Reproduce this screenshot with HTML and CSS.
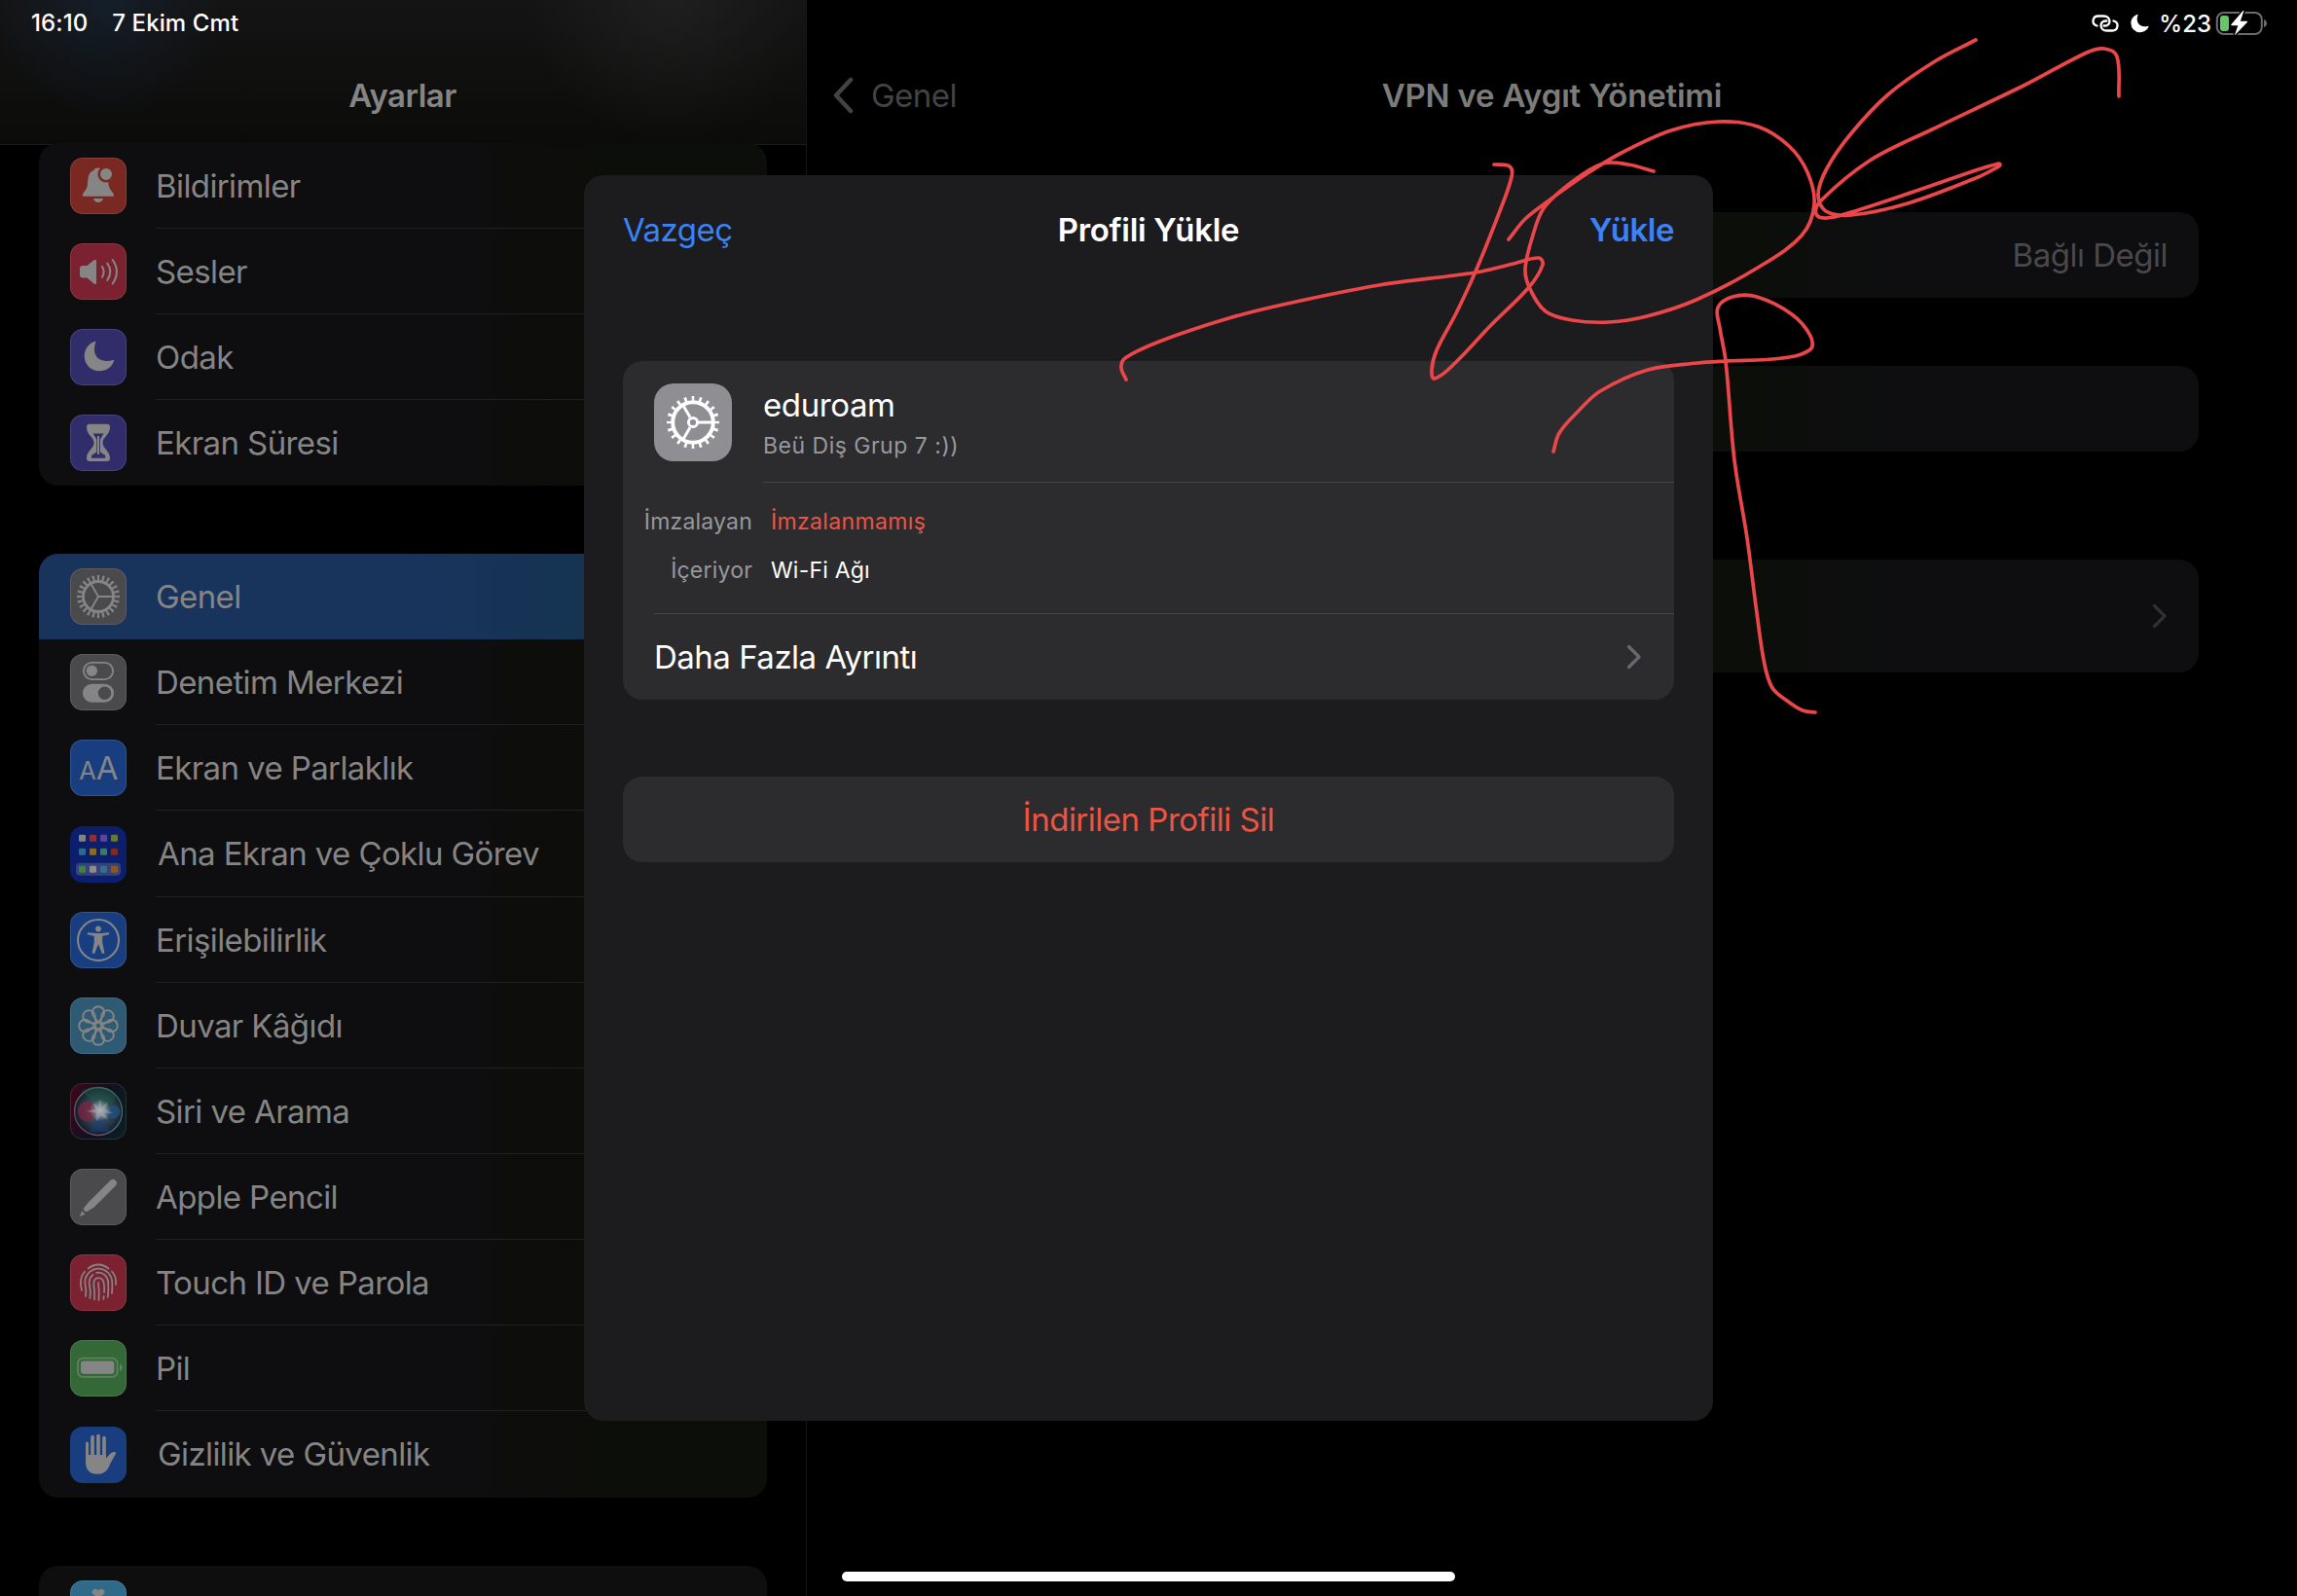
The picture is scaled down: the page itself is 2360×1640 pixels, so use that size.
FILE: index.html
```html
<!DOCTYPE html>
<html lang="tr">
<head>
<meta charset="utf-8">
<title>Ayarlar</title>
<link rel="stylesheet" href="styles.css">
</head>
<body>
<svg class="defs" width="0" height="0" aria-hidden="true">
  <defs>
    <radialGradient id="siri-orb" cx=".52" cy=".48" r=".52">
      <stop offset="0" stop-color="#b4b8bd"/><stop offset=".16" stop-color="#828b93"/><stop offset=".42" stop-color="#354f5c"/><stop offset="1" stop-color="#101c28"/>
    </radialGradient>
    <radialGradient id="siri-glow">
      <stop offset="0" stop-color="#b4b8bd"/><stop offset=".35" stop-color="#8f979e" stop-opacity=".8"/><stop offset="1" stop-color="#8f979e" stop-opacity="0"/>
    </radialGradient>
    <linearGradient id="siri-bg" x1="0" y1=".2" x2="1" y2=".6">
      <stop offset="0" stop-color="#3b0718"/><stop offset=".5" stop-color="#12101f"/><stop offset="1" stop-color="#0a1d22"/>
    </linearGradient>
    <linearGradient id="siri-rim" x1="0" y1="1" x2="1" y2="0">
      <stop offset="0" stop-color="#7a3454"/><stop offset=".5" stop-color="#5a6a72"/><stop offset="1" stop-color="#2f6b55"/>
    </linearGradient>
    <path id="petal" d="M29 25.500L23.600 18.500A6.200 6.200 0 1 1 34.400 18.500Z"/>
  </defs>
</svg>

<div class="screen">
  <aside class="sidebar">
    <header class="bar sidebar-bar"><h1 class="bar-title">Ayarlar</h1></header>
    <nav class="lists">
      <ul class="group group-first">
        <li class="row"><svg class="icon" viewBox="0 0 58 58" style="background:#7a2822"><path class="g" d="M12.800 38.500C13.400 35 17.600 33.500 18 27C18.300 18 20 14.500 24.500 13C26 9.800 31.500 9.800 33 13C37.500 14.500 39 18 39.500 27C40 33.500 44.500 35 45 38.500Q45 39.800 43.500 39.800H14.300Q12.800 39.800 12.800 38.500Z"/><path class="g" d="M23.800 42h10.200q-1.500 4-5.100 4t-5.100-4z"/><circle cx="37" cy="17" r="7.300" class="g" stroke="#7a2822" stroke-width="2.600"/></svg><span class="label">Bildirimler</span></li>
        <li class="row"><svg class="icon" viewBox="0 0 58 58" style="background:#7b2130"><path class="g" d="M13 23h4.500L24.500 17.300Q27 15.800 27 18.500V40.500Q27 43 24.500 41.500L17.500 35.500H13Q10 35.500 10 32.500V26Q10 23 13 23Z"/><g class="l" stroke-width="2.100"><path d="M33 24q3.200 5.300 0 10.600"/><path d="M38.300 20.500q6 8.700 0 17.400"/><path d="M43.700 17q8.500 12.200 0 24.400"/></g></svg><span class="label">Sesler</span></li>
        <li class="row"><svg class="icon" viewBox="0 0 58 58" style="background:#312d6b"><path class="g" d="M25.500 12.800C19 15 14.700 21 14.700 28c0 8.500 6.800 15.300 15.300 15.300 7 0 13-4 15.100-10.500q.2-1-.8-.8C38 34 31.500 33 28 29.500 24.500 25.500 24.300 19.500 26.300 13.600q.2-1-.8-.8z"/></svg><span class="label">Odak</span></li>
        <li class="row"><svg class="icon" viewBox="0 0 58 58" style="background:#312d6b"><path class="g" d="M20 9.800h18a3 3 0 0 1 3 3c0 8.500-7.500 10.200-7.500 16.200s7.500 8 7.500 16a3 3 0 0 1-3 3H20a3 3 0 0 1-3-3c0-8 7.500-10 7.500-16S17 21.300 17 12.800a3 3 0 0 1 3-3z"/><path fill="#312d6b" d="M23.700 19.500h10.800L30.900 25.500V38.500l5.300 3.600v2.700H22v-2.700l5.300-3.600V25.500z"/><path class="l flat" stroke-width="2" d="M29 22v19"/></svg><span class="label">Ekran Süresi</span></li>
      </ul>
      <ul class="group">
        <li class="row selected"><svg class="icon" viewBox="0 0 58 58" style="background:#4a4a4c"><g class="l flat"><circle cx="29" cy="29" r="15.500" stroke-width="2.800"/><circle cx="29" cy="29" r="19" stroke-width="6" pathLength="240" stroke-dasharray="4.400 5.600" stroke-dashoffset="2.200"/><path stroke-width="1.900" d="M29 29H44.500M29 29L21.200 15.600M29 29L21.200 42.400"/></g></svg><span class="label">Genel</span></li>
        <li class="row"><svg class="icon" viewBox="0 0 58 58" style="background:#4a4a4c"><rect class="l" x="13.900" y="8.900" width="30.200" height="17.200" rx="8.600" stroke-width="1.900"/><circle class="g" cx="22.300" cy="17.300" r="5.700"/><rect class="g" x="13" y="30.700" width="32" height="19" rx="9.500"/><circle fill="#4a4a4c" cx="35.500" cy="40.200" r="6.700"/></svg><span class="label">Denetim Merkezi</span></li>
        <li class="row"><svg class="icon" viewBox="0 0 58 58" style="background:#193e80"><text class="glyph" x="9.300" y="41" font-size="25.500">A</text><text class="glyph" x="26.800" y="41" font-size="33">A</text></svg><span class="label">Ekran ve Parlaklık</span></li>
        <li class="row row-tall"><svg class="icon plain" viewBox="0 0 58 58" style="background:#0b1f6d"><rect x="6" y="37.700" width="46" height="13" rx="4" fill="#37427a"/><g><rect x="9" y="8.700" width="7" height="7" rx="1.300" fill="#85837e"/><rect x="20" y="8.700" width="7" height="7" rx="1.300" fill="#8a3038"/><rect x="31" y="8.700" width="7" height="7" rx="1.300" fill="#65429a"/><rect x="42" y="8.700" width="7" height="7" rx="1.300" fill="#687a30"/><rect x="9" y="22.700" width="7" height="7" rx="1.300" fill="#2e6a8c"/><rect x="20" y="22.700" width="7" height="7" rx="1.300" fill="#8b6b20"/><rect x="31" y="22.700" width="7" height="7" rx="1.300" fill="#3a7b62"/><rect x="42" y="22.700" width="7" height="7" rx="1.300" fill="#812a22"/><rect x="9" y="40.700" width="7" height="7" rx="1.300" fill="#3c8244"/><rect x="20" y="40.700" width="7" height="7" rx="1.300" fill="#8c8c90"/><rect x="31" y="40.700" width="7" height="7" rx="1.300" fill="#2f7188"/><rect x="42" y="40.700" width="7" height="7" rx="1.300" fill="#8a5726"/></g></svg><span class="label">Ana Ekran ve Çoklu Görev</span></li>
        <li class="row"><svg class="icon" viewBox="0 0 58 58" style="background:#193e80"><circle class="l" cx="29" cy="29" r="21" stroke-width="2.100"/><circle class="g" cx="29" cy="17.500" r="2.900"/><path class="g" stroke="#858585" stroke-width="1.200" stroke-linejoin="round" d="M18.500 21.800L26 22.700H32L39.500 21.800 39.600 22.700 32.600 24.500V31L34.800 42 33.300 42.400 29.600 33H28.400L24.700 42.400 23.200 42 25.400 31V24.500L18.400 22.700Z"/></svg><span class="label">Erişilebilirlik</span></li>
        <li class="row"><svg class="icon" viewBox="0 0 58 58" style="background:#2f5a73"><g class="l" stroke-width="1.800"><use href="#petal"/><use href="#petal" transform="rotate(45 29 29)"/><use href="#petal" transform="rotate(90 29 29)"/><use href="#petal" transform="rotate(135 29 29)"/><use href="#petal" transform="rotate(180 29 29)"/><use href="#petal" transform="rotate(225 29 29)"/><use href="#petal" transform="rotate(270 29 29)"/><use href="#petal" transform="rotate(315 29 29)"/><circle cx="29" cy="29" r="3.300"/></g></svg><span class="label">Duvar Kâğıdı</span></li>
        <li class="row"><svg class="icon" viewBox="0 0 58 58"><rect width="58" height="58" rx="13" fill="url(#siri-bg)"/><rect x=".5" y=".5" width="57" height="57" rx="12.500" fill="none" stroke="#fff" opacity=".11"/><circle cx="29" cy="29" r="24.500" fill="url(#siri-orb)" stroke="url(#siri-rim)" stroke-width="1.300"/><ellipse cx="17.500" cy="29" rx="9.500" ry="10.500" fill="#7c2444" opacity=".75"/><ellipse cx="44.500" cy="29.500" rx="7" ry="7" fill="#245080" opacity=".75"/><path d="M12 8Q29-1 46 12Q50 22 31 27Z" fill="#1f5440" opacity=".45"/><path d="M20 50L30 30 42 50Z" fill="#1d3c7a" opacity=".5"/><circle cx="31" cy="28" r="11" fill="url(#siri-glow)"/><path d="M31 16l1.300 8.500 7-5-4 7 9 4.500-10-.5 5 7-7.500-4-5 6 .5-9-11-1.500 10.500-2.500-4-6 6 4z" fill="#a8adb2" opacity=".45"/></svg><span class="label">Siri ve Arama</span></li>
        <li class="row"><svg class="icon" viewBox="0 0 58 58" style="background:#4a4a4c"><path class="l" stroke-width="7.600" d="M44 14.700L22.500 36.200"/><path class="g" d="M19.800 33.500L25.200 38.900 18 43.800Q16 44.500 14.500 43T14.500 39.800Z"/><path class="g" d="M12.300 43.500L15.500 46.800 9.700 49Z"/></svg><span class="label">Apple Pencil</span></li>
        <li class="row"><svg class="icon" viewBox="0 0 58 58" style="background:#7b2130"><g class="l" stroke-width="1.750"><path d="M18.500 14.500Q29 6.500 39.500 14.500"/><path d="M12 37Q8.500 25 15 17.500"/><path d="M43 17.500Q48 23 47 31"/><path d="M16 43Q17 37 15.500 31C14 22 21 14.500 29 14.500C37 14.500 43 21 43.300 29Q43.500 36 43 40"/><path d="M20.500 45Q21.500 38 20 32Q18.500 25 23.500 21"/><path d="M27 18.800C34 17.500 39 23 39.200 29Q39.600 38 38.800 44"/><path d="M25 46.500Q25.500 38 24.300 31.500C23.800 27 26 24 29 24C32.500 24 34.500 26.500 34.800 30Q35.400 35 35 39"/><path d="M29.500 47Q30.200 38 29 29"/><path d="M34.700 43L34.400 46"/></g></svg><span class="label">Touch ID ve Parola</span></li>
        <li class="row"><svg class="icon" viewBox="0 0 58 58" style="background:#346937"><rect x="8" y="18.600" width="40.600" height="19.300" rx="5.500" fill="none" stroke="#5f8262" stroke-width="1.700"/><rect class="g" x="11" y="21.500" width="34.300" height="13.300" rx="3"/><path fill="#5f8262" d="M51 24.500Q53.700 25.500 53.700 28.200T51 32Z"/></svg><span class="label">Pil</span></li>
        <li class="row row-tall"><svg class="icon plain" viewBox="0 0 58 58" style="background:#193e80"><g class="l"><path stroke-width="3" d="M17.500 17V35"/><path stroke-width="3.700" d="M23 10.500V35M29 9.600V35M35 11.600V35"/></g><path class="g" d="M16 29H36.900V32.500L41 28Q43.500 25.300 46.800 26.300Q47.700 26.800 46.800 28L41.500 37.500C39 44 36 48.700 28.500 48.700C20 48.700 16 44.500 16 36Z"/></svg><span class="label">Gizlilik ve Güvenlik</span></li>
      </ul>
      <ul class="group group-last">
        <li class="row"><svg class="icon" viewBox="0 0 58 58" style="background:#2f6a88"><path class="g" d="M29 18L24 14.500A3.200 3.200 0 1 1 29 12.500A3.200 3.200 0 1 1 34 14.500Z"/></svg></li>
      </ul>
    </nav>
  </aside>

  <main class="detail">
    <header class="bar detail-bar">
      <div class="back"><svg width="22" height="38" viewBox="0 0 22 38"><path d="M19 3L4 19 19 35" fill="none" stroke="#434343" stroke-width="4.500" stroke-linecap="round" stroke-linejoin="round"/></svg><span>Genel</span></div>
      <h2 class="bar-title detail-title">VPN ve Aygıt Yönetimi</h2>
    </header>
    <section class="cards">
      <div class="card vpn"><span class="value">Bağlı Değil</span></div>
      <div class="card"></div>
      <div class="card profile"><svg width="16" height="26" viewBox="0 0 16 26"><path d="M2.500 2.500L13 13 2.500 23.500" fill="none" stroke="#303033" stroke-width="3.400" stroke-linecap="round" stroke-linejoin="round"/></svg></div>
    </section>
  </main>
</div>

<div class="status">
  <div class="status-left"><span class="clock">16:10</span><span class="date">7 Ekim Cmt</span></div>
  <div class="status-right">
    <svg width="28" height="18" viewBox="0 0 28 18"><g fill="none" stroke="#fff" stroke-width="2.300" stroke-linecap="round"><path d="M5.500 11.500C-.5 10 .5 1.500 7 1.500H12.500C20 1.500 20.500 11.500 13.500 11.500H12.500"/><path d="M22.500 6.500C28.500 8 27.500 16.500 21 16.500H15.500C8 16.500 7.500 6.500 14.500 6.500H15.500"/></g></svg>
    <svg class="moon" width="19" height="20" viewBox="0 0 19 20"><path fill="#fff" d="M7 .8C3 2.300 .4 5.800 .4 10A9.200 9.200 0 0 0 9.600 19.200C13.700 19.200 17.200 17 18.600 13.300Q18.700 12.500 18 12.700C14 14 10.500 13 8.500 10.800C6.500 8.500 6.200 5 7.500 1.500Q7.700.6 7 .8Z"/></svg>
    <span class="percent">%23</span>
    <svg class="battery" width="54" height="26" viewBox="0 0 54 26"><rect x="1.800" y="2" width="46" height="22" rx="7" fill="none" stroke="#6c6c6c" stroke-width="2"/><rect x="5" y="5" width="9" height="16" rx="3" fill="#67c768"/><path fill="#6c6c6c" d="M50 9Q53 10.200 53 13T50 17Z"/><path d="M28.500 0L16.300 14.300Q15.800 15.200 17 15.200H23.300L19.800 25.500 33 11.800Q33.500 10.800 32.300 10.800H25.800L29.500 0Z" fill="#fff" stroke="#000" stroke-width="3" paint-order="stroke"/></svg>
  </div>
</div>

<section class="modal">
  <header class="modal-bar"><span class="action">Vazgeç</span><h3 class="modal-title">Profili Yükle</h3><span class="action install">Yükle</span></header>
  <div class="panel">
    <div class="summary">
      <svg class="profile-icon" width="80" height="80" viewBox="0 0 80 80"><g fill="none" stroke="#fff"><circle cx="40" cy="40" r="20.800" stroke-width="4"/><circle cx="40" cy="40" r="24.500" stroke-width="5" pathLength="200" stroke-dasharray="3.400 6.600" stroke-dashoffset="1.700"/><circle cx="40" cy="40" r="4.600" stroke-width="3"/><path stroke-width="3" d="M46 40H60M37 34.800L30 22.700M37 45.200L30 57.300"/></g></svg>
      <div class="names"><div class="name">eduroam</div><div class="org">Beü Diş Grup 7 :))</div></div>
    </div>
    <dl class="facts">
      <dt>İmzalayan</dt><dd class="unsigned">İmzalanmamış</dd>
      <dt>İçeriyor</dt><dd>Wi-Fi Ağı</dd>
    </dl>
    <div class="more"><span>Daha Fazla Ayrıntı</span><svg width="16" height="26" viewBox="0 0 16 26"><path d="M2.500 2.500L13 13 2.500 23.500" fill="none" stroke="#68686c" stroke-width="3.400" stroke-linecap="round" stroke-linejoin="round"/></svg></div>
  </div>
  <div class="remove">İndirilen Profili Sil</div>
</section>

<svg class="ink" viewBox="0 0 2360 1640" aria-hidden="true">
  <path data-points="1157,390 1152,378 1156,368 1191,351 1259,328 1318,313 1417,293 1516,280 1555,271 1581,265 1585,272 1571,295 1531,335 1496,372 1474,389 1471,380 1476,360 1496,322 1516,279 1539,222 1553,182 1551,171 1535,169"/>
  <path data-points="1699,176 1673,169 1647,168 1615,187 1586,214 1574,245 1567,277 1572,297 1588,320 1615,329 1653,331 1692,325 1743,308 1806,275 1851,242 1864,210 1857,177 1838,150 1806,130 1765,125 1717,134 1666,157 1628,180 1590,207 1567,225 1550,246"/>
  <path data-points="2030,41 1988,63 1940,97 1902,137 1877,173 1868,200 1876,217 1902,221 1960,209 2030,183 2050,173 2055,169 2050,169 2030,175 1966,197 1902,218 1877,224 1866,220 1870,207 1921,165 1985,133 2081,87 2144,54 2162,50 2175,58 2177,99"/>
  <path data-points="1596,464 1602,445 1621,423 1644,402 1693,380 1744,373 1773,371 1831,368 1860,359 1860,345 1841,323 1805,305 1780,305 1765,316 1767,337 1773,371 1782,473 1795,553 1805,630 1813,683 1821,707 1836,720 1852,730 1865,732"/>
</svg>

<div class="home-indicator"></div>
<script src="script.js"></script>
</body>
</html>
```
FILE: styles.css
```css
* { box-sizing: border-box; }
body, h1, h2, h3, ul, dl, dd { margin: 0; padding: 0; }
body {
  position: relative;
  width: 2360px;
  height: 1640px;
  overflow: hidden;
  background: #000;
  color: #858585;
  font-family: Inter, "Liberation Sans", sans-serif;
  font-size: 33px;
  letter-spacing: -0.5px;
}
.defs { position: absolute; }
.screen { display: grid; grid-template-columns: 829px 1fr; height: 1640px; }

.bar { display: flex; height: 149px; padding-top: 47px; align-items: center; justify-content: center; }
.bar-title { font-size: 33px; font-weight: 600; letter-spacing: -0.5px; }

.sidebar { height: 1640px; overflow: hidden; border-right: 1px solid #151515; }
.sidebar-bar {
  border-bottom: 1px solid #1b1b1b;
  background:
    radial-gradient(circle at 110px 0, rgba(22, 38, 58, .55), transparent 120px),
    radial-gradient(circle at 690px 0, rgba(44, 44, 44, .45), transparent 150px),
    linear-gradient(#141414, #0b0b0a);
}
.sidebar-bar .bar-title { padding-right: 1px; }
.lists { display: flex; flex-direction: column; gap: 70px; padding: 0 40px; }
.group {
  list-style: none;
  overflow: hidden;
  border-radius: 20px;
  background: linear-gradient(90deg, #0e0e10 450px, #0d0d0b 500px, #0c0e09 580px);
}
.group-first { margin-top: -2px; }
.group-last { background: #0e0e0f; }
.row { position: relative; display: flex; align-items: center; height: 88px; padding-left: 32px; gap: 30px; letter-spacing: -0.6px; }
.row-tall { height: 89px; padding-top: 1px; gap: 32px; }
.row-tall .label { padding-bottom: 2px; }
.row:not(:last-child):not(.selected)::after {
  content: "";
  position: absolute;
  left: 120px;
  right: 0;
  bottom: 0;
  height: 1px;
  background: #202122;
}
.selected { background: linear-gradient(90deg, #18345d 380px, #153350 580px); }
.icon { width: 58px; height: 58px; flex: none; border-radius: 13px; box-shadow: inset 0 0 0 1px rgba(255, 255, 255, .11); }
.icon.plain { box-shadow: none; }
.g { fill: #858585; }
.l { fill: none; stroke: #858585; stroke-linecap: round; }
.flat { stroke-linecap: butt; }
.glyph { fill: #858585; font-weight: 400; letter-spacing: 0; }

.detail-bar { position: relative; }
.back { position: absolute; left: 26px; top: 47px; height: 101px; display: flex; align-items: center; gap: 18px; color: #434343; }
.detail-title { color: #7c7c7a; letter-spacing: -0.2px; }
.cards { display: flex; flex-direction: column; padding: 69px 101px 0; }
.card {
  display: flex;
  align-items: center;
  justify-content: flex-end;
  height: 88px;
  margin-bottom: 70px;
  padding-right: 32px;
  border-radius: 20px;
  background: linear-gradient(90deg, #0c0e09 850px, #0d0e0d 930px, #0e0e10 1020px);
}
.value { color: #49494b; }
.profile { height: 116px; margin-top: 41px; }

.status {
  position: absolute;
  inset: 0 0 auto 0;
  display: flex;
  justify-content: space-between;
  height: 48px;
  padding: 0 30px 0 32px;
  align-items: center;
  color: #fff;
  font-size: 24px;
  font-weight: 500;
  letter-spacing: 0;
}
.status-left, .status-right { display: flex; align-items: center; }
.status-left { gap: 25px; padding-bottom: 1px; letter-spacing: 0.1px; }
.moon { margin-left: 12px; }
.percent { margin-left: 10px; }
.battery { margin-left: 4px; }

.modal {
  position: absolute;
  left: 600px;
  top: 180px;
  width: 1160px;
  height: 1280px;
  padding: 0 40px;
  border-radius: 20px;
  background: #1c1c1e;
  color: #fff;
}
.modal-bar { display: grid; grid-template-columns: 1fr auto 1fr; align-items: center; height: 112px; margin-bottom: 79px; }
.modal-title { font-size: 33px; font-weight: 600; letter-spacing: -0.3px; }
.action { color: #3b82f7; }
.install { font-weight: 600; text-align: right; }
.panel { height: 348px; border-radius: 20px; background: #2c2c2e; }
.summary { display: flex; height: 125px; padding: 23px 0 0 32px; gap: 32px; }
.profile-icon { flex: none; border-radius: 20px; background: #8e8e93; }
.names { flex: 1; border-bottom: 1px solid #444447; }
.name { line-height: 44px; letter-spacing: -0.4px; }
.org { line-height: 40px; color: #98989f; font-size: 23px; letter-spacing: 0.5px; }
.facts { display: grid; grid-template-columns: 133px 1fr; column-gap: 19px; grid-auto-rows: 50px; height: 134px; padding-top: 15px; font-size: 23px; line-height: 50px; letter-spacing: 0.2px; }
.facts dt { color: #98989f; text-align: right; }
.facts .unsigned { color: #eb5545; letter-spacing: 0.35px; }
.more { display: flex; align-items: center; justify-content: space-between; height: 89px; margin-left: 32px; padding-right: 33px; border-top: 1px solid #444447; }
.remove { height: 88px; margin-top: 79px; border-radius: 20px; background: #2c2c2e; color: #eb5545; line-height: 88px; text-align: center; }

.ink { position: absolute; inset: 0; width: 2360px; height: 1640px; fill: none; stroke: #eb464a; stroke-width: 3.700; stroke-linecap: round; stroke-linejoin: round; }
.home-indicator { position: absolute; left: 865px; top: 1615px; width: 630px; height: 10px; border-radius: 5px; background: #fff; }
```
FILE: script.js
```js
// Turns each list of pen samples into a smooth curve passing through every sample.
document.querySelectorAll('.ink path').forEach(function (path) {
  var p = path.dataset.points.split(' ').map(function (s) { return s.split(',').map(Number); });
  var d = 'M' + p[0];
  for (var i = 0; i < p.length - 1; i++) {
    var a = p[i - 1] || p[i], b = p[i], c = p[i + 1], e = p[i + 2] || c;
    var len = Math.hypot(c[0] - b[0], c[1] - b[1]);
    var handle = function (from, to, sign, at) {
      var n = Math.hypot(to[0] - from[0], to[1] - from[1]) || 1;
      return [at[0] + sign * (to[0] - from[0]) / n * len / 3, at[1] + sign * (to[1] - from[1]) / n * len / 3];
    };
    d += 'C' + handle(a, c, 1, b) + ' ' + handle(b, e, -1, c) + ' ' + c;
  }
  path.setAttribute('d', d);
});
```
